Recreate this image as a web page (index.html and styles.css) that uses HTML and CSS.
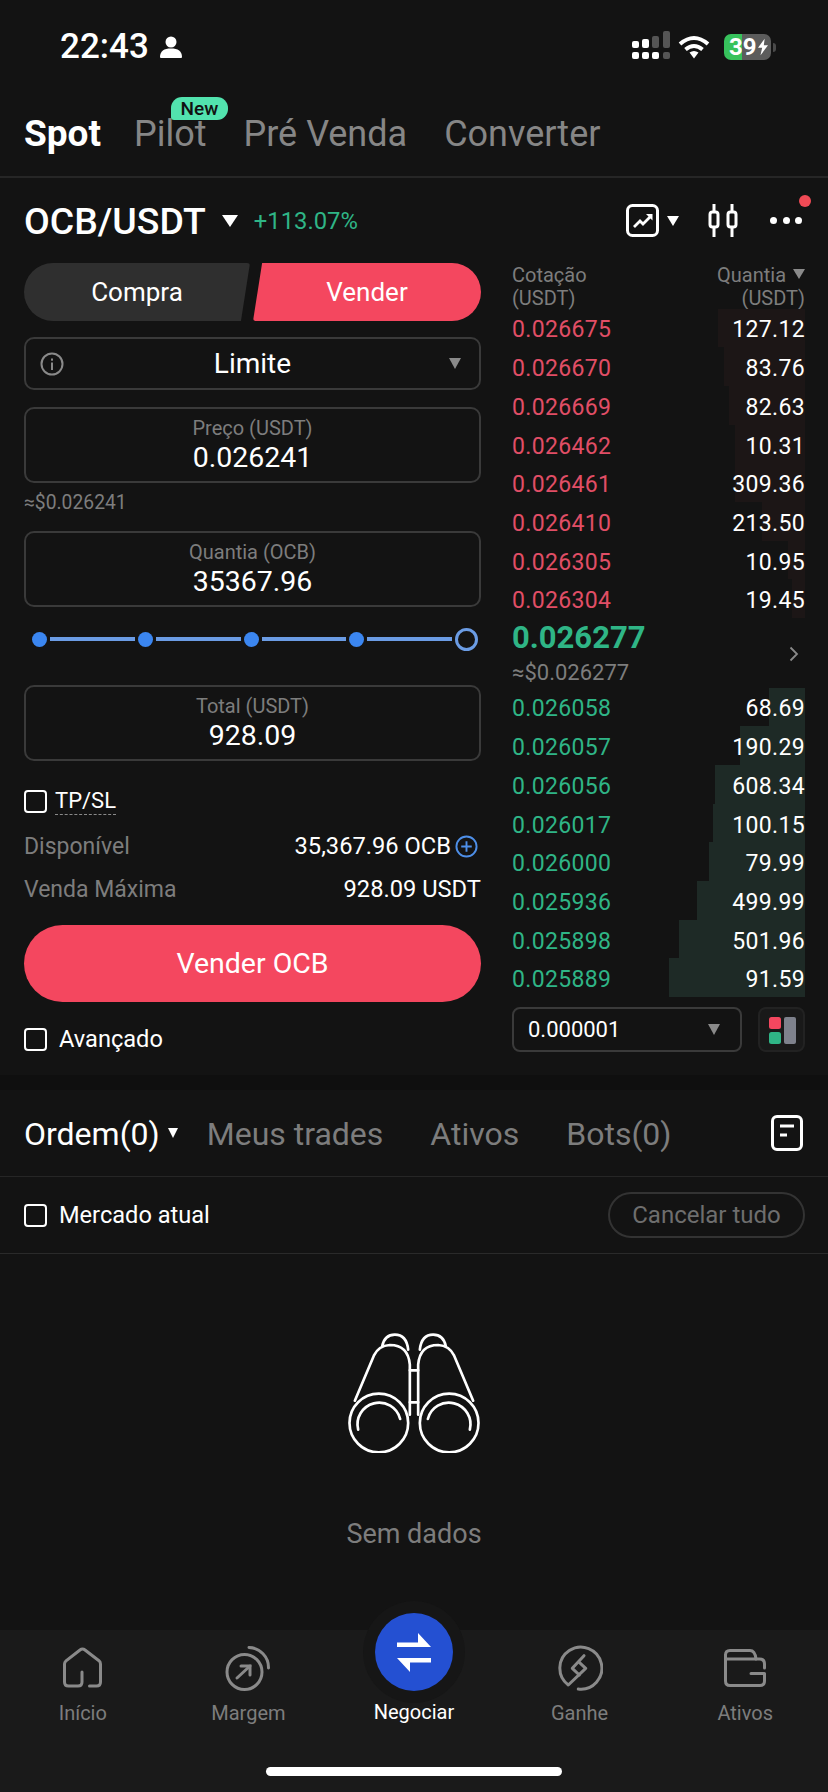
FILE: index.html
```html
<!DOCTYPE html>
<html lang="pt">
<head>
<meta charset="utf-8">
<title>OCB/USDT Spot</title>
<link rel="stylesheet" href="styles.css">
</head>
<body>
<div class="app">
  <header class="status">
    <div class="status-left">
      <span class="time">22:43</span>
      <svg class="person" viewBox="0 0 22 22"><circle cx="11" cy="6" r="5.500"/><path d="M0 21c0-6 4-8.500 11-8.500S22 15 22 21q0 1-1 1H1q-1 0-1-1z"/></svg>
    </div>
    <div class="status-right">
      <svg class="signal" viewBox="0 0 40 32"><g fill="#fff"><rect x="0" y="10" width="7" height="7" rx="2"/><rect x="10" y="8" width="7" height="9" rx="2"/><rect x="0" y="21" width="7" height="7" rx="2"/><rect x="10" y="21" width="7" height="7" rx="2"/><rect x="20" y="21" width="7" height="7" rx="2"/></g><g fill="#555"><rect x="20" y="5" width="7" height="12" rx="2"/><rect x="31" y="0" width="7" height="17" rx="2"/><rect x="31" y="21" width="7" height="7" rx="2"/></g></svg>
      <svg class="wifi" viewBox="0 0 32 24"><g fill="none" stroke="#fff" stroke-width="4"><path d="M2 9q14-12 28 0"/><path d="M7.500 14.500q8.500-7 17 0"/></g><path d="M11.500 17.500q4.500-3 9 0L16 23.500z" fill="#fff"/></svg>
      <div class="battery"><span class="battery-text">39</span><svg class="bolt" viewBox="0 0 12 20"><path d="M8 0L0 11h5l-2 9 9-12H7z"/></svg></div>
      <span class="battery-nub"></span>
    </div>
  </header>

  <nav class="tabs">
    <span class="tab active">Spot</span>
    <span class="tab pilot">Pilot<span class="new-badge">New</span></span>
    <span class="tab">Pré Venda</span>
    <span class="tab">Converter</span>
  </nav>

  <section class="pair">
    <div class="pair-left">
      <span class="pair-name">OCB/USDT</span>
      <span class="caret caret-white"></span>
      <span class="pair-change">+113.07%</span>
    </div>
    <div class="pair-right">
      <svg class="icon-chart" viewBox="0 0 33 33"><rect x="1.500" y="1.500" width="30" height="30" rx="5" fill="none" stroke="#fff" stroke-width="3"/><path d="M8 23l6-6 3 3 8-8" fill="none" stroke="#fff" stroke-width="2.800"/><path d="M20 10h6.500v6.500z" fill="#fff"/></svg>
      <span class="caret caret-small"></span>
      <svg class="icon-candles" viewBox="0 0 30 33"><g fill="none" stroke="#fff" stroke-width="3"><rect x="2" y="8" width="8" height="15" rx="2.500"/><rect x="20" y="8" width="8" height="15" rx="2.500"/><path d="M6 0v8M6 23v10M24 0v8M24 23v10"/></g></svg>
      <div class="more"><i></i><i></i><i></i><span class="red-dot"></span></div>
    </div>
  </section>

  <section class="trade">
    <div class="form">
      <div class="side">
        <div class="side-btn buy">Compra</div>
        <div class="side-btn sell">Vender</div>
      </div>
      <div class="limit">
        <svg class="info" viewBox="0 0 24 24"><circle cx="12" cy="12" r="10.500" fill="none" stroke="#8a8a8a" stroke-width="2"/><rect x="11" y="10.500" width="2" height="7.500" fill="#8a8a8a"/><rect x="11" y="6.500" width="2" height="2.200" fill="#8a8a8a"/></svg>
        <span class="limit-text">Limite</span>
        <span class="caret caret-grey"></span>
      </div>
      <div class="field field-price"><span class="field-label">Preço (USDT)</span><span class="field-value">0.026241</span></div>
      <div class="approx">≈$0.026241</div>
      <div class="field"><span class="field-label">Quantia (OCB)</span><span class="field-value">35367.96</span></div>
      <div class="slider">
        <i class="knob"></i><b class="line"></b><i class="knob"></i><b class="line"></b><i class="knob"></i><b class="line"></b><i class="knob"></i><b class="line"></b><i class="knob-end"></i>
      </div>
      <div class="field"><span class="field-label">Total (USDT)</span><span class="field-value">928.09</span></div>
      <div class="check-row tp"><span class="check"></span><span class="dotted">TP/SL</span></div>
      <div class="info-row first"><span class="muted">Disponível</span><span class="info-val">35,367.96 OCB<svg class="plus" viewBox="0 0 24 24"><circle cx="12" cy="12" r="10.500" fill="none" stroke="#4e8fe8" stroke-width="2"/><path d="M12 6.500v11M6.500 12h11" stroke="#4e8fe8" stroke-width="2"/></svg></span></div>
      <div class="info-row"><span class="muted">Venda Máxima</span><span class="info-val">928.09 USDT</span></div>
      <div class="cta">Vender OCB</div>
      <div class="check-row adv"><span class="check"></span><span>Avançado</span></div>
    </div>

    <div class="book">
      <div class="book-head">
        <span>Cotação<br>(USDT)</span>
        <span class="right">Quantia <i class="caret caret-head"></i><br>(USDT)</span>
      </div>
      <div class="row ask" style="background-size:87px 100%"><span class="price">0.026675</span><span class="qty">127.12</span></div>
      <div class="row ask" style="background-size:81px 100%"><span class="price">0.026670</span><span class="qty">83.76</span></div>
      <div class="row ask" style="background-size:76px 100%"><span class="price">0.026669</span><span class="qty">82.63</span></div>
      <div class="row ask" style="background-size:70px 100%"><span class="price">0.026462</span><span class="qty">10.31</span></div>
      <div class="row ask" style="background-size:70px 100%"><span class="price">0.026461</span><span class="qty">309.36</span></div>
      <div class="row ask" style="background-size:43px 100%"><span class="price">0.026410</span><span class="qty">213.50</span></div>
      <div class="row ask" style="background-size:17px 100%"><span class="price">0.026305</span><span class="qty">10.95</span></div>
      <div class="row ask" style="background-size:13px 100%"><span class="price">0.026304</span><span class="qty">19.45</span></div>
      <div class="mid">
        <div><div class="mid-price">0.026277</div><div class="mid-approx">≈$0.026277</div></div>
        <svg class="chev" viewBox="0 0 10 16"><path d="M1.500 1.500L8 8l-6.500 6.500" fill="none" stroke="#8a8a8a" stroke-width="1.800"/></svg>
      </div>
      <div class="row bid" style="background-size:36px 100%"><span class="price">0.026058</span><span class="qty">68.69</span></div>
      <div class="row bid" style="background-size:65px 100%"><span class="price">0.026057</span><span class="qty">190.29</span></div>
      <div class="row bid" style="background-size:90px 100%"><span class="price">0.026056</span><span class="qty">608.34</span></div>
      <div class="row bid" style="background-size:92px 100%"><span class="price">0.026017</span><span class="qty">100.15</span></div>
      <div class="row bid" style="background-size:96px 100%"><span class="price">0.026000</span><span class="qty">79.99</span></div>
      <div class="row bid" style="background-size:108px 100%"><span class="price">0.025936</span><span class="qty">499.99</span></div>
      <div class="row bid" style="background-size:126px 100%"><span class="price">0.025898</span><span class="qty">501.96</span></div>
      <div class="row bid" style="background-size:136px 100%"><span class="price">0.025889</span><span class="qty">91.59</span></div>
      <div class="book-foot">
        <div class="precision"><span>0.000001</span><span class="caret caret-grey"></span></div>
        <div class="layout-btn">
          <svg viewBox="0 0 28 28"><rect x="1" y="1" width="12" height="12" rx="2.500" fill="#f4475f"/><rect x="1" y="16" width="12" height="12" rx="2.500" fill="#2fb586"/><rect x="16" y="1" width="12" height="27" rx="2" fill="#7e818c"/></svg>
        </div>
      </div>
    </div>
  </section>

  <div class="band"></div>

  <section class="order-tabs">
    <span class="otab active">Ordem(0)</span><span class="caret caret-order"></span>
    <span class="otab first">Meus trades</span>
    <span class="otab">Ativos</span>
    <span class="otab">Bots(0)</span>
    <svg class="icon-orders" viewBox="0 0 32 36"><rect x="1.500" y="1.500" width="29" height="33" rx="4.500" fill="none" stroke="#fff" stroke-width="3"/><path d="M9 11h14M9 20h7" stroke="#fff" stroke-width="3"/></svg>
  </section>

  <section class="filter">
    <div class="check-row"><span class="check"></span><span>Mercado atual</span></div>
    <span class="cancel">Cancelar tudo</span>
  </section>

  <section class="empty">
    <svg class="binoculars" viewBox="145 100 395 360"><g fill="none" stroke="#fff" stroke-width="8" stroke-linecap="round">
      <circle cx="237" cy="370" r="88"/><circle cx="448" cy="370" r="88"/>
      <path d="M175 390A63 63 0 0 1 301 358"/><path d="M384 358A63 63 0 0 1 510 390"/>
      <path d="M165 303L222 168Q236 138 270 136Q325 136 330 195V345"/><path d="M520 303L463 168Q449 138 415 136Q360 136 355 195V345"/>
      <path d="M247 140Q254 105 285 105Q320 105 325 150"/><path d="M438 140Q431 105 400 105Q365 105 360 150"/>
      <path d="M330 212H355M330 308H355"/>
    </g></svg>
    <div class="empty-text">Sem dados</div>
  </section>

  <footer class="nav">
    <div class="nav-items">
      <div class="nav-item">
        <svg class="nav-icon" viewBox="0 0 40 41"><path d="M19.500 25V35q0 4-4 4H6q-4 0-4-4V17q0-2 1.500-3.200L17.500 3q2.500-2 5 0L36.500 13.800Q38 15 38 17v18q0 4-4 4H27" fill="none" stroke="#8a8a8a" stroke-width="3" stroke-linecap="round" stroke-linejoin="round"/></svg>
        <span>Início</span>
      </div>
      <div class="nav-item">
        <svg class="nav-icon icon-lg" viewBox="0 0 46 46"><g fill="none" stroke="#8a8a8a" stroke-width="3" stroke-linecap="round"><circle cx="19.500" cy="27" r="17.500"/><path d="M24 2.500A20 20 0 0 1 43.500 23"/><path d="M12 33L25 21"/><path d="M16 21H25V30"/></g></svg>
        <span>Margem</span>
      </div>
      <div class="nav-item center">
        <div class="trade-circle"><svg viewBox="0 0 40 40"><path d="M3 14h34L24 0v9.500H3z" fill="#fff" transform="translate(0 1)"/><path d="M37 25H3l13 14v-9.500h21z" fill="#fff" transform="translate(0 1)"/></svg></div>
        <span>Negociar</span>
      </div>
      <div class="nav-item">
        <svg class="nav-icon icon-lg" viewBox="0 0 46 46"><g fill="none" stroke="#8a8a8a" stroke-width="3" stroke-linecap="round" stroke-linejoin="round"><path d="M27 10.700L15.300 23.300L22.300 30"/><path d="M22.300 17.300L28.700 23.300L11.300 40A21 21 0 1 1 21.300 44"/></g></svg>
        <span>Ganhe</span>
      </div>
      <div class="nav-item">
        <svg class="nav-icon icon-wallet" viewBox="0 0 42 38"><g fill="none" stroke="#8a8a8a" stroke-width="3" stroke-linecap="round" stroke-linejoin="round"><path d="M40.500 19V15q0-5-5-5H1.500"/><path d="M1.500 6q0-4.500 4.500-4.500H26q5 0 6 8.500"/><path d="M27 24.500H40.500V32q0 4.500-4.500 4.500H6q-4.500 0-4.500-4.500V6"/></g></svg>
        <span>Ativos</span>
      </div>
    </div>
    <div class="home-bar"></div>
  </footer>
</div>
</body>
</html>
```

FILE: styles.css
```css
* { box-sizing: border-box; }
html, body { margin: 0; padding: 0; background: #131313; }
body { font-family: Roboto, "Noto Sans", sans-serif; color: #fff; }
i { font-style: normal; }

.app { width: 828px; height: 1792px; display: flex; flex-direction: column; overflow: hidden; background: #131313; }

/* Status bar */
.status { height: 90px; padding: 0 52px 0 60px; display: flex; justify-content: space-between; align-items: flex-start; flex: none; }
.status-left { display: flex; align-items: center; gap: 11px; height: 40px; margin-top: 27px; }
.time { font-size: 35px; font-weight: 500; line-height: 40px; }
.person { width: 22px; height: 22px; fill: #fff; }
.status-right { display: flex; align-items: center; height: 32px; margin-top: 31px; }
.signal { width: 40px; height: 32px; margin-right: 6px; }
.wifi { width: 32px; height: 24px; margin-right: 14px; }
.battery { width: 47px; height: 26px; border-radius: 7px; background: linear-gradient(90deg, #37c25c 0 38%, #5c5c5c 38% 100%); display: flex; align-items: center; padding-left: 5px; gap: 1px; }
.battery-text { font-size: 24px; font-weight: 700; line-height: 26px; }
.bolt { width: 10px; height: 18px; fill: #fff; }
.battery-nub { width: 3px; height: 9px; border-radius: 0 3px 3px 0; background: #4a4a4a; margin-left: 2px; }

/* Top tabs */
.tabs { height: 88px; flex: none; padding: 0 24px 0; display: flex; align-items: flex-start; gap: 37px; border-bottom: 2px solid #262626; }
.tab { font-size: 36px; line-height: 46px; margin-top: 21px; color: #868686; position: relative; }
.tab.active { color: #fff; font-weight: 700; font-size: 37px; margin-right: -4px; }
.new-badge { position: absolute; left: 37px; top: -14px; width: 57px; height: 23px; border-radius: 11px 11px 11px 3px; background: #52e3ae; color: #111; font-size: 19px; line-height: 23px; text-align: center; font-weight: 500; }

/* Pair header */
.pair { height: 85px; flex: none; padding: 0 24px; display: flex; align-items: center; justify-content: space-between; }
.pair-left { display: flex; align-items: center; }
.pair-name { font-size: 37.400px; font-weight: 500; line-height: 44px; }
.pair-change { font-size: 23.800px; color: #2fb586; margin-left: 16px; }
.pair-right { display: flex; align-items: center; }
.caret { display: inline-block; width: 0; height: 0; border-style: solid; border-color: transparent; border-width: 10px 7px 0; border-top-color: #fff; }
.caret-white { border-width: 12px 8px 0; margin-left: 16px; }
.caret-small { border-width: 10px 6px 0; margin: 0 0 0 8px; }
.caret-grey { border-width: 11px 6.500px 0; border-top-color: #8a8a8a; }
.caret-head { border-width: 10px 6px 0; border-top-color: #8a8a8a; margin-left: 2px; }
.caret-order { border-width: 10px 5.500px 0; margin-left: 8px; }
.icon-chart { width: 33px; height: 33px; }
.icon-candles { width: 30px; height: 33px; margin-left: 29px; }
.more { display: flex; gap: 5.500px; margin-left: 32px; margin-right: 2px; position: relative; }
.more i { width: 7px; height: 7px; border-radius: 50%; background: #fff; }
.red-dot { position: absolute; right: -9px; top: -22px; width: 12px; height: 12px; border-radius: 50%; background: #f04a55; }

/* Trade panel */
.trade { flex: none; padding: 0 23px 21px 24px; display: flex; justify-content: space-between; height: 812px; }
.form { width: 457px; display: flex; flex-direction: column; }
.side { display: flex; gap: 3px; height: 58px; flex: none; }
.side-btn { display: flex; align-items: center; justify-content: center; font-size: 26px; }
.buy { width: 226px; background: #2f2f2f; border-radius: 29px 3px 3px 29px; clip-path: polygon(0 0, 100% 0, 96% 100%, 0 100%); }
.sell { width: 228px; background: #f4475f; border-radius: 3px 29px 29px 3px; clip-path: polygon(4% 0, 100% 0, 100% 100%, 0 100%); }
.limit { margin-top: 16px; height: 53px; flex: none; border: 2px solid #3a3a3a; border-radius: 10px; display: flex; align-items: center; padding: 0 18px 0 14px; }
.info { width: 24px; height: 24px; }
.limit-text { flex: 1; text-align: center; font-size: 28px; margin-left: -8px; }
.field { height: 76px; flex: none; border: 2px solid #3a3a3a; border-radius: 10px; display: flex; flex-direction: column; align-items: center; padding-top: 7px; }
.field-price { margin-top: 17px; }
.field-label { font-size: 20px; line-height: 24px; color: #7d7d7d; }
.field-value { font-size: 28.500px; line-height: 34px; margin-top: 1px; }
.approx { height: 48px; padding-top: 8px; font-size: 19.300px; line-height: 24px; color: #7d7d7d; flex: none; }
.slider { height: 78px; padding: 0 4px 14px 8px; display: flex; align-items: center; flex: none; gap: 2px; }
.knob { width: 15px; height: 15px; border-radius: 50%; background: #3b86f0; flex: none; }
.line { flex: 1; height: 4px; background: #6b9ce4; margin: 0 1px; }
.knob-end { width: 23px; height: 23px; border-radius: 50%; border: 3px solid #6b9ce4; flex: none; margin-right: -1px; }
.check-row { display: flex; align-items: center; height: 30px; font-size: 23.600px; gap: 12px; flex: none; }
.tp { margin-top: 25px; gap: 8px; }
.adv { margin-top: 22px; }
.check { width: 23px; height: 23px; border: 2px solid #fff; border-radius: 4px; flex: none; }
.dotted { border-bottom: 1px dashed #8a8a8a; line-height: 26px; font-size: 22px; }
.info-row { height: 43px; flex: none; display: flex; justify-content: space-between; align-items: center; font-size: 23px; padding-top: 1px; }
.info-row.first { margin-top: 8px; }
.muted { color: #7d7d7d; }
.info-val { display: flex; align-items: center; gap: 4px; font-size: 23.700px; }
.plus { width: 23px; height: 23px; margin-right: 3px; }
.cta { margin-top: 15px; height: 77px; flex: none; border-radius: 39px; background: #f4475f; display: flex; align-items: center; justify-content: center; font-size: 28.500px; }

/* Order book */
.book { width: 293px; display: flex; flex-direction: column; }
.book-head { display: flex; justify-content: space-between; font-size: 20px; line-height: 23px; padding-top: 1px; color: #7d7d7d; height: 45.650px; flex: none; }
.right { text-align: right; }
.right i { display: inline-block; vertical-align: 3px; }
.row { height: 38.700px; flex: none; display: flex; justify-content: space-between; align-items: center; font-size: 23px; letter-spacing: .35px; padding-top: 4px; background-repeat: no-repeat; background-position: right top; }
.ask { background-image: linear-gradient(#1c1616, #1c1616); }
.bid { background-image: linear-gradient(#1e2a26, #1e2a26); }
.ask .price { color: #e14e66; }
.bid .price { color: #2fb586; }
.mid { height: 69.500px; flex: none; display: flex; justify-content: space-between; align-items: center; }
.mid-price { font-size: 31px; line-height: 40px; font-weight: 700; color: #2fb586; }
.mid-approx { font-size: 22px; line-height: 28px; padding-top: 1px; color: #7d7d7d; }
.chev { width: 10px; height: 16px; margin: 2px 6px 0 0; }
.book-foot { display: flex; justify-content: space-between; margin-top: 10px; height: 45px; flex: none; }
.precision { width: 230px; border: 2px solid #3a3a3a; border-radius: 8px; display: flex; align-items: center; justify-content: space-between; padding: 0 20px 0 14px; font-size: 22px; }
.layout-btn { width: 47px; border: 2px solid #222; border-radius: 8px; display: flex; align-items: center; justify-content: center; background: #191919; }
.layout-btn svg { width: 28px; height: 28px; }

.band { height: 15px; flex: none; background: #0f0f0f; }

/* Order tabs */
.order-tabs { height: 87px; flex: none; padding: 0 25px 0 24px; display: flex; align-items: center; border-bottom: 1px solid #262626; }
.otab { font-size: 32px; color: #7d7d7d; margin-right: 47px; padding-top: 1px; }
.otab.active { color: #fff; margin-right: 0; }
.otab.first { margin-left: 29px; }
.icon-orders { width: 32px; height: 36px; margin-left: auto; }

.filter { height: 77px; flex: none; padding: 0 23px 0 24px; display: flex; align-items: center; justify-content: space-between; border-bottom: 1px solid #2a2a2a; }
.cancel { height: 46px; width: 197px; border: 2px solid #333; border-radius: 23px; display: flex; align-items: center; justify-content: center; color: #6e6e6e; font-size: 24px; }

/* Empty state */
.empty { flex: 1; display: flex; flex-direction: column; align-items: center; padding-top: 79px; min-height: 0; }
.binoculars { width: 132px; height: 120px; }
.empty-text { margin-top: 66px; font-size: 27px; line-height: 30px; color: #7d7d7d; }

/* Bottom nav */
.nav { height: 162px; flex: none; background: #1a1a1a; display: flex; flex-direction: column; }
.nav-items { display: flex; }
.nav-item { flex: 1; display: flex; flex-direction: column; align-items: center; padding-top: 17px; font-size: 20px; line-height: 26px; color: #7d7d7d; }
.nav-item span { margin-top: 12px; }
.nav-icon { width: 41px; height: 41px; }
.icon-lg { width: 46px; height: 46px; margin: -2px 0 -3px; }
.icon-wallet { width: 42px; height: 38px; margin: 2px 0 1px; }
.center { color: #fff; }
.center span { margin-top: 8px; }
.trade-circle { width: 78px; height: 78px; margin-top: -34px; border-radius: 50%; background: #2450d2; box-shadow: 0 0 0 12px #161616; display: flex; align-items: center; justify-content: center; }
.trade-circle svg { width: 40px; height: 40px; }
.home-bar { width: 296px; height: 9px; border-radius: 5px; background: #fff; margin: auto auto 16px; }
```
